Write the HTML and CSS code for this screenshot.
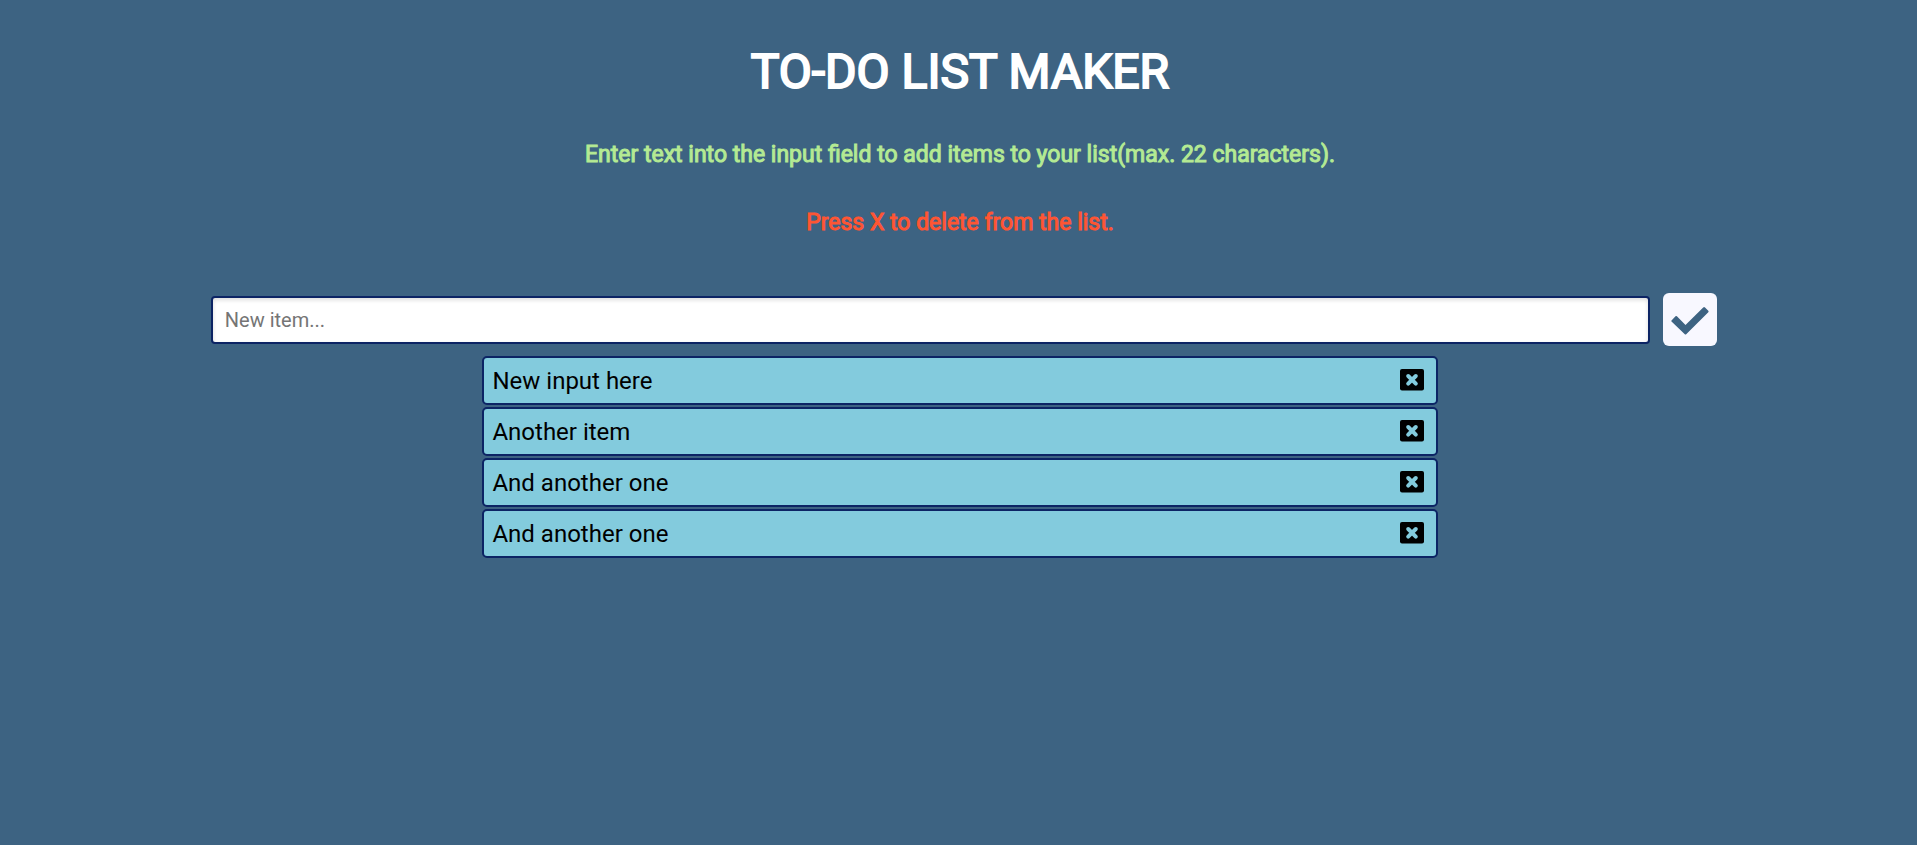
FILE: index.html
```html
<!DOCTYPE html>
<html lang="en">
<head>
<meta charset="utf-8">
<meta name="viewport" content="width=device-width, initial-scale=1">
<title>To-Do List Maker</title>
<link rel="stylesheet" href="styles.css">
</head>
<body>
<svg class="symbols">
  <symbol id="x-square" viewBox="0 0 24 22">
    <rect width="24" height="21.500" rx="2"/>
    <path class="cross-arms" d="M8.200 7 15.800 14.600M15.800 7 8.200 14.600"/>
  </symbol>
</svg>
<main class="page">
  <h1 class="title">TO-DO LIST MAKER</h1>
  <p class="hint hint-add">Enter text into the input field to add items to your list(max. 22 characters).</p>
  <p class="hint hint-delete">Press X to delete from the list.</p>
  <form class="entry">
    <input class="entry-input" type="text" maxlength="22" placeholder="New item..." aria-label="New item">
    <button class="entry-add" type="button" aria-label="Add item">
      <svg class="check" viewBox="0 0 54 53" aria-hidden="true"><path d="M8.500 27.500 12.500 23.300Q13.200 22.700 13.900 23.300L22.500 32 40.200 14.400Q41.100 13.500 42 14.400L45.300 17.700Q46 18.500 45.300 19.200L23.200 41.200Q22.500 41.800 21.800 41.200L8.500 28.600Q8 28 8.500 27.500Z"/></svg>
    </button>
  </form>
  <ul class="list">
    <li class="item"><span>New input here</span><button class="delete" type="button" aria-label="Delete New input here"><svg class="cross"><use href="#x-square"/></svg></button></li>
    <li class="item"><span>Another item</span><button class="delete" type="button" aria-label="Delete Another item"><svg class="cross"><use href="#x-square"/></svg></button></li>
    <li class="item"><span>And another one</span><button class="delete" type="button" aria-label="Delete And another one"><svg class="cross"><use href="#x-square"/></svg></button></li>
    <li class="item"><span>And another one</span><button class="delete" type="button" aria-label="Delete And another one"><svg class="cross"><use href="#x-square"/></svg></button></li>
  </ul>
</main>
</body>
</html>
```
FILE: styles.css
```css
* {
  box-sizing: border-box;
}

body {
  margin: 0;
  background: #3d6382;
  color: #000;
  font-family: Roboto, sans-serif;
}

.symbols {
  display: none;
}

.page {
  display: flex;
  flex-direction: column;
  align-items: center;
  padding: 44px 0 40px 3px;
}

.title {
  margin: 0;
  color: #fff;
  font-size: 48px;
  font-weight: 400;
  line-height: 56px;
  -webkit-text-stroke: 2px #fff;
}

.hint {
  margin: 0;
  font-size: 23px;
  line-height: 28px;
  -webkit-text-stroke: 1px currentColor;
}

.hint-add {
  margin-top: 41px;
  color: #b4ea93;
}

.hint-delete {
  margin-top: 40px;
  color: #ff5533;
}

.entry {
  display: flex;
  align-items: center;
  justify-content: center;
  width: 100%;
  margin-top: 56px;
}

.entry-input {
  width: 75.2%;
  height: 48px;
  margin: 0 13px 0 8px;
  padding: 0 12px;
  border: 2px solid #0c2464;
  border-radius: 4px;
  background: #fff;
  box-shadow: inset 0 2px 4px rgba(0, 0, 0, 0.14);
  font-family: inherit;
  font-size: 20px;
}

.entry-input::placeholder {
  color: #757575;
}

.entry-add {
  flex: none;
  width: 54px;
  height: 53px;
  padding: 0;
  border: 0;
  border-radius: 6px;
  background: #f8f8ff;
}

.check {
  display: block;
  width: 100%;
  height: 100%;
  fill: #3d6382;
}

.list {
  display: flex;
  flex-direction: column;
  gap: 2px;
  width: 49.9%;
  margin: 10px 0 0;
  padding: 0;
  list-style: none;
}

.item {
  display: flex;
  align-items: center;
  justify-content: space-between;
  height: 49px;
  padding: 0 12px 0 8px;
  border: 2px solid #0c2464;
  border-radius: 5px;
  background: #83cbdd;
  font-size: 24px;
  line-height: 28px;
}

.delete {
  padding: 0 0 2px;
  border: 0;
  background: none;
}

.cross {
  display: block;
  width: 24px;
  height: 22px;
}

.cross-arms {
  fill: none;
  stroke: #83cbdd;
  stroke-width: 4px;
  stroke-linecap: round;
}
```
